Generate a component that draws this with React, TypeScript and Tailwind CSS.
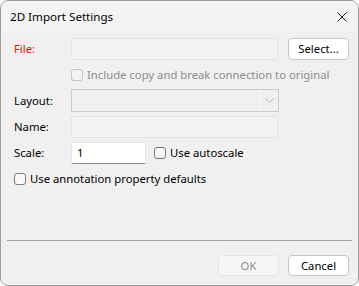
import React from "react";

const font = { fontFamily: '"Noto Sans", "Open Sans", sans-serif' };

function Check({ disabled, label, className = "" }: { disabled?: boolean; label: string; className?: string }) {
  return (
    <label className={`flex items-center gap-[4px] ${className}`}>
      <span
        className={`h-[12px] w-[12px] rounded-[3px] border ${
          disabled ? "border-[#c4c4c4] bg-[#f3f3f3]" : "border-[#7a7a7a] bg-[#f8f8f8]"
        }`}
      />
      <span className={disabled ? "text-[#8d8d8d]" : "text-black"}>{label}</span>
    </label>
  );
}

export default function App() {
  return (
    <div className="h-[286px] w-[359px] bg-white text-[11.3px] leading-none" style={font}>
      <div className="flex h-full w-full flex-col overflow-hidden rounded-[8px] border border-[#9c9c9c] bg-[#f0f0f0]">
        {/* Title bar */}
        <div className="flex h-[31px] shrink-0 items-center justify-between bg-[#f3f3f3] pl-[9px] pr-[11px]">
          <span className="pt-[1px] text-[11.6px] text-black">2D Import Settings</span>
          <svg width="10" height="10" viewBox="0 0 10 10" className="mt-[1px]">
            <path d="M0.5 0.5 L9.5 9.5 M9.5 0.5 L0.5 9.5" stroke="#1a1a1a" strokeWidth="1" />
          </svg>
        </div>

        <div className="flex flex-col pl-[13px] pt-[6px]">
          {/* File */}
          <div className="flex h-[22px] items-center">
            <span className="w-[57px] text-[#ff0000]">File:</span>
            <div className="h-[22px] w-[207px] rounded-[2px] border border-[#e3e3e3] bg-[#f3f3f3]" />
            <button className="ml-[10px] h-[22px] w-[61px] rounded-[4px] border border-[#c6c6c6] bg-white text-black">
              Select...
            </button>
          </div>

          {/* Include copy */}
          <div className="mt-[4px] flex h-[22px] items-center pl-[57px]">
            <Check disabled label="Include copy and break connection to original" />
          </div>

          {/* Layout */}
          <div className="mt-[3px] flex h-[23px] items-center">
            <span className="w-[57px] text-black">Layout:</span>
            <div className="flex h-[23px] w-[208px] border border-[#cccccc] bg-[#f0f0f0]">
              <div className="flex-1" />
              <div className="w-[1px] bg-[#fafafa]" />
              <div className="flex w-[17px] items-center justify-center">
                <svg width="9" height="5" viewBox="0 0 9 5">
                  <path d="M0.5 0.5 L4.5 4.5 L8.5 0.5" stroke="#b4b4b4" fill="none" strokeWidth="1" />
                </svg>
              </div>
            </div>
          </div>

          {/* Name */}
          <div className="mt-[4px] flex h-[22px] items-center">
            <span className="w-[57px] text-black">Name:</span>
            <div className="h-[22px] w-[207px] rounded-[2px] border border-[#e3e3e3] bg-[#f3f3f3]" />
          </div>

          {/* Scale */}
          <div className="mt-[4px] flex h-[22px] items-center">
            <span className="w-[57px] text-black">Scale:</span>
            <div className="flex h-[22px] w-[75px] items-center rounded-[2px] border border-[#e6e6e6] border-b-[#8a8a8a] bg-white pl-[5px] text-black">
              1
            </div>
            <Check label="Use autoscale" className="ml-[8px]" />
          </div>

          {/* Annotation defaults */}
          <div className="mt-[4px] flex h-[22px] items-center">
            <Check label="Use annotation property defaults" />
          </div>
        </div>

        <div className="mx-[6px] mt-[50px] h-[1px] bg-[#a0a0a0]" />

        <div className="mt-[14px] flex justify-end gap-[9px] pr-[9px]">
          <button className="h-[21px] w-[61px] rounded-[4px] border border-[#e4e4e4] bg-[#f6f6f6] text-[#8d8d8d]">
            OK
          </button>
          <button className="h-[21px] w-[61px] rounded-[4px] border border-[#c6c6c6] bg-white text-black">
            Cancel
          </button>
        </div>
      </div>
    </div>
  );
}
